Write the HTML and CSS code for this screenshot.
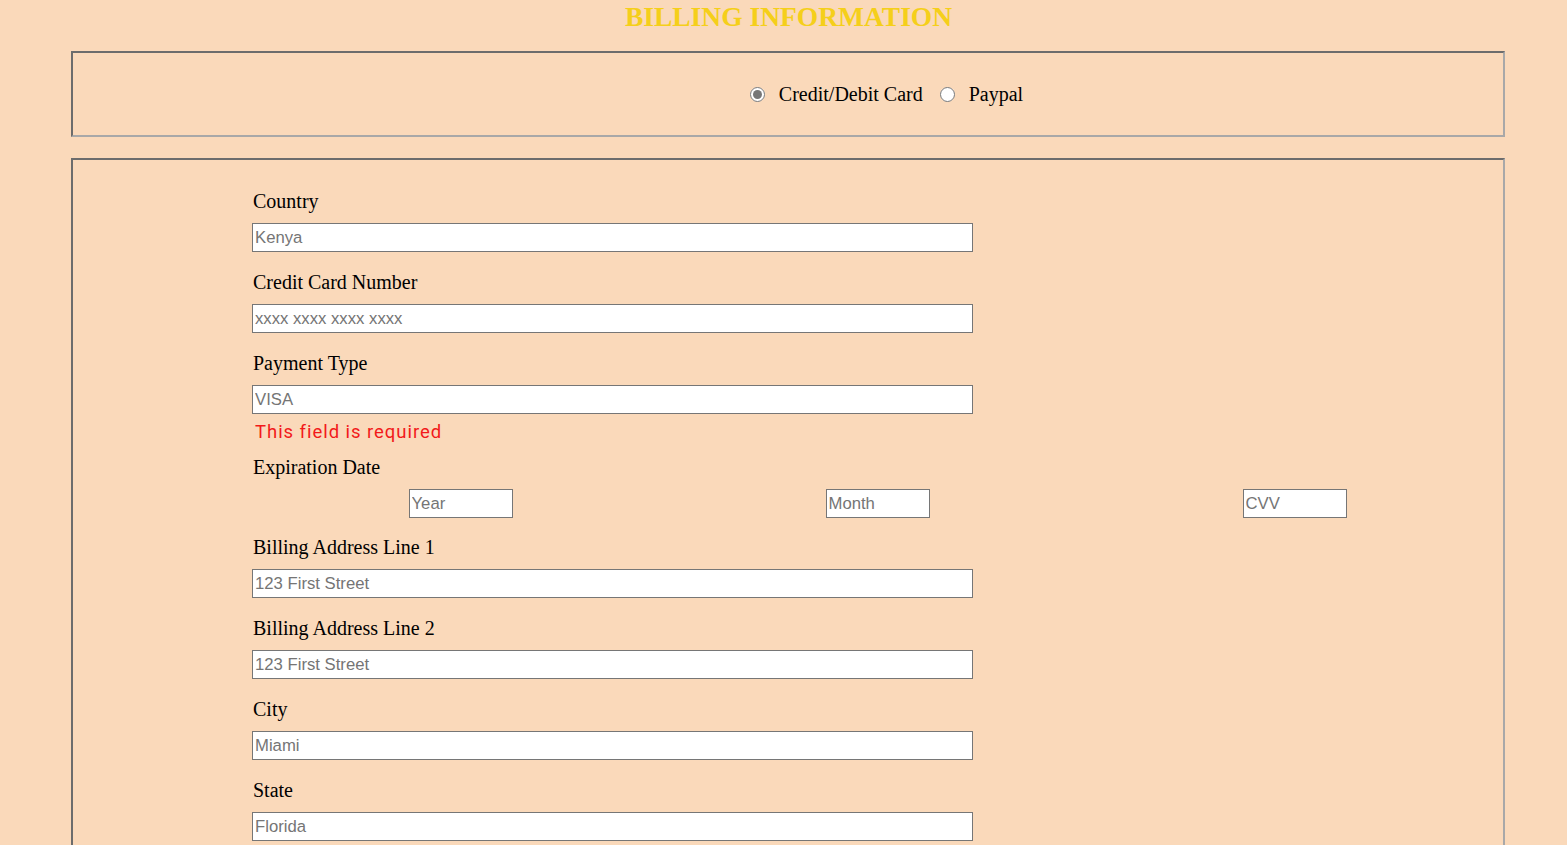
FILE: index.html
```html
<!DOCTYPE html>
<html>
<head>
<meta charset="utf-8">
<title>Billing Information</title>
<link rel="stylesheet" href="styles.css">
</head>
<body>
<h1 class="title">BILLING INFORMATION</h1>
<fieldset class="box method-box">
  <div class="methods">
    <label class="method"><input type="radio" name="method" checked> Credit/Debit Card</label>
    <label class="method"><input type="radio" name="method"> Paypal</label>
  </div>
</fieldset>
<fieldset class="box form-box">
  <div class="group">
    <label class="field-label">Country</label>
    <input class="text-input" type="text" placeholder="Kenya">
  </div>
  <div class="group">
    <label class="field-label">Credit Card Number</label>
    <input class="text-input" type="text" placeholder="xxxx xxxx xxxx xxxx">
  </div>
  <div class="group">
    <label class="field-label">Payment Type</label>
    <input class="text-input" type="text" placeholder="VISA">
    <div class="error">This field is required</div>
  </div>
  <div class="group expiry-group">
    <label class="field-label">Expiration Date</label>
    <div class="expiry">
      <input class="small-input" type="text" placeholder="Year">
      <input class="small-input" type="text" placeholder="Month">
      <input class="small-input" type="text" placeholder="CVV">
    </div>
  </div>
  <div class="group">
    <label class="field-label">Billing Address Line 1</label>
    <input class="text-input" type="text" placeholder="123 First Street">
  </div>
  <div class="group">
    <label class="field-label">Billing Address Line 2</label>
    <input class="text-input" type="text" placeholder="123 First Street">
  </div>
  <div class="group">
    <label class="field-label">City</label>
    <input class="text-input" type="text" placeholder="Miami">
  </div>
  <div class="group">
    <label class="field-label">State</label>
    <input class="text-input" type="text" placeholder="Florida">
  </div>
</fieldset>
</body>
</html>
```
FILE: styles.css
```css
html, body {
  margin: 0;
  padding: 0;
  background: #fad9ba;
}
body {
  font-family: "Liberation Serif", "Times New Roman", serif;
  color: #000;
  overflow: hidden;
}
.title {
  margin: 0;
  text-align: center;
  font-family: "Liberation Serif", serif;
  font-weight: bold;
  font-size: 27.5px;
  line-height: 34px;
  color: #f5cf1a;
  padding-left: 10px;
}
.box {
  box-sizing: border-box;
  width: 1434px;
  margin: 0 0 0 71px;
  border: 2px solid;
  border-color: #6c6c6c #a8a8a8 #a8a8a8 #6c6c6c;
  min-inline-size: 0;
}
.method-box {
  margin-top: 17px;
  height: 86px;
  padding: 0;
}
.methods {
  display: flex;
  justify-content: center;
  align-items: center;
  height: 82px;
  padding-left: 197px;
  gap: 17px;
}
.method {
  display: flex;
  align-items: center;
  font-size: 20px;
}
.method input {
  accent-color: #777;
  width: 15px;
  height: 15px;
  margin: 0 14px 0 0;
}
.form-box {
  margin-top: 21px;
  padding: 29px 0 20px 179px;
}
.group {
  display: flex;
  flex-direction: column;
  align-items: flex-start;
  margin-bottom: 18px;
}
.expiry-group {
  margin-bottom: 17px;
}
.field-label {
  font-size: 20px;
  line-height: 24px;
  margin-bottom: 10px;
  padding-left: 1px;
}
.text-input, .small-input {
  box-sizing: border-box;
  height: 29px;
  margin: 0;
  padding: 0 2px;
  border: 1px solid #767676;
  background: #fff;
  font-family: "Liberation Sans", Arial, sans-serif;
  font-size: 16.7px;
  color: #000;
  outline: none;
}
.text-input::placeholder, .small-input::placeholder {
  color: #757575;
}
.text-input {
  width: 721px;
}
.small-input {
  width: 104px;
}
.expiry {
  display: flex;
  justify-content: space-around;
  width: 100%;
}
.error {
  margin-top: 8px;
  margin-bottom: -6px;
  padding-left: 3px;
  font-family: Roboto, "Open Sans", sans-serif;
  font-size: 18.5px;
  line-height: 21px;
  letter-spacing: 0.95px;
  color: #f21a1a;
}
```
